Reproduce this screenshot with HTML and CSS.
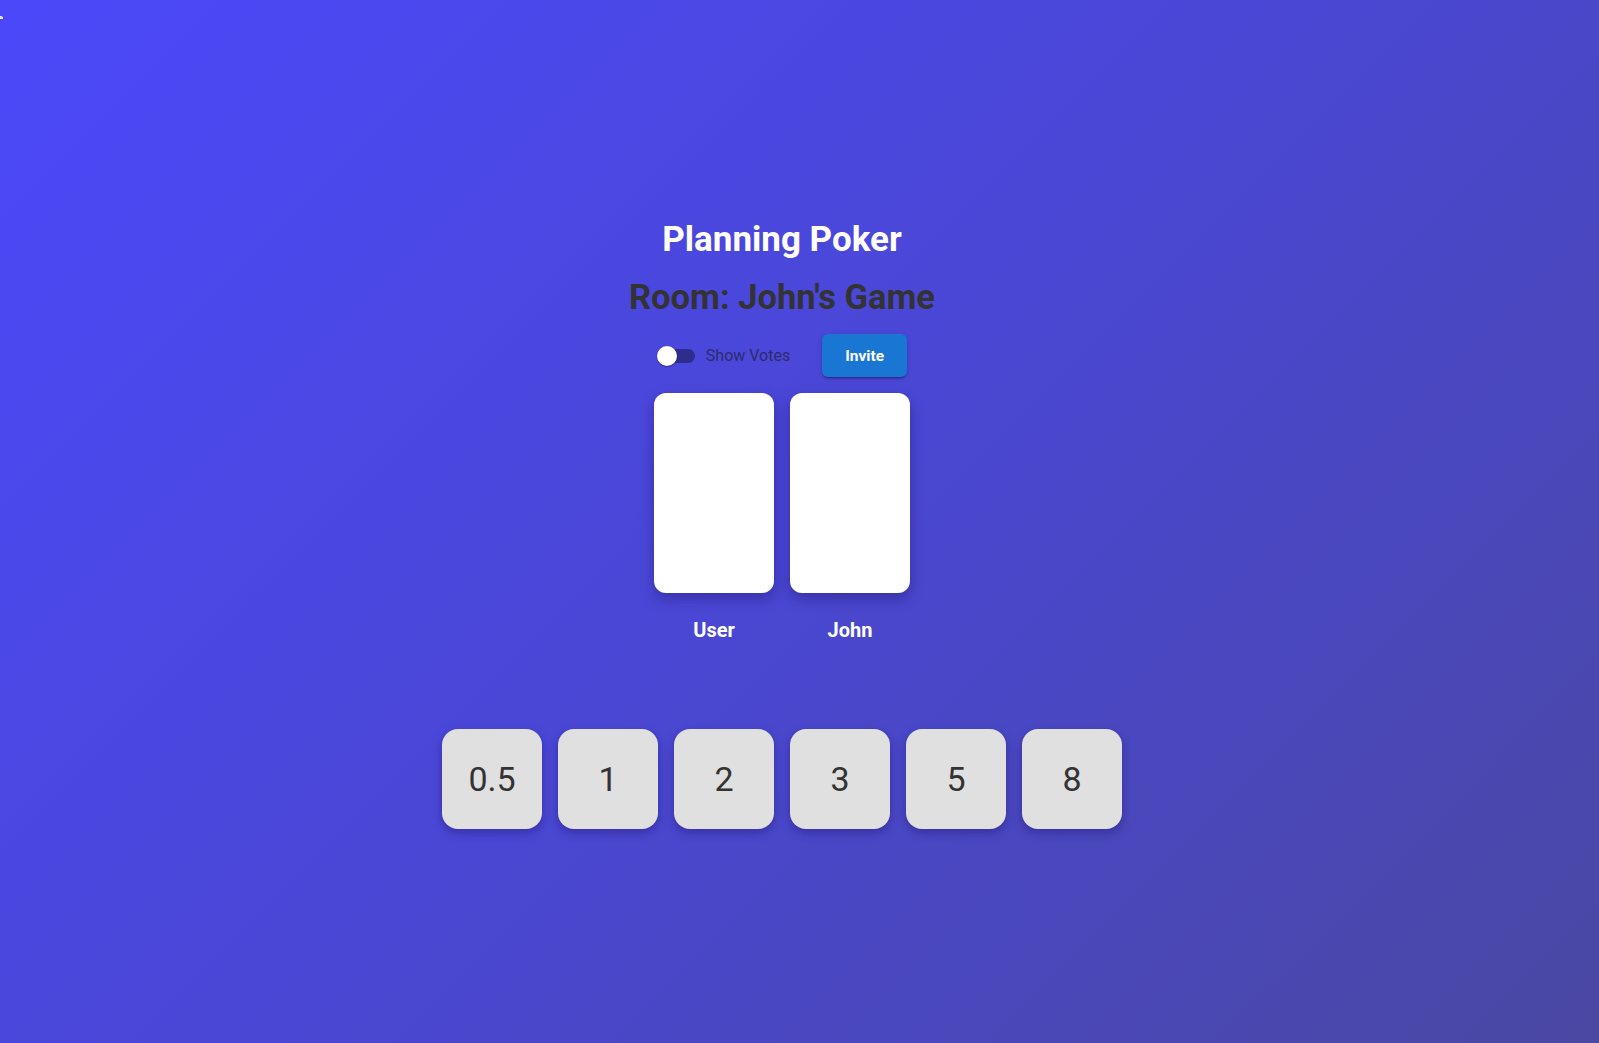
FILE: index.html
```html
<!DOCTYPE html>
<html>
<head>
<meta charset="utf-8">
<link rel="stylesheet" href="styles.css">
</head>
<body>
<span class="artifact"></span>
<main class="page">
  <h1 class="title">Planning Poker</h1>
  <h2 class="room">Room: John's Game</h2>
  <div class="controls">
    <label class="switch-label">
      <span class="switch"><span class="track"></span><span class="thumb"></span></span>
      <span class="switch-text">Show Votes</span>
    </label>
    <button class="invite">Invite</button>
  </div>
  <div class="players">
    <div class="player">
      <div class="card"></div>
      <div class="name">User</div>
    </div>
    <div class="player">
      <div class="card"></div>
      <div class="name">John</div>
    </div>
  </div>
  <div class="deck">
    <button class="vote">0.5</button>
    <button class="vote">1</button>
    <button class="vote">2</button>
    <button class="vote">3</button>
    <button class="vote">5</button>
    <button class="vote">8</button>
  </div>
</main>
</body>
</html>
```
FILE: styles.css
```css
html, body {
  margin: 0;
  height: 100%;
}
body {
  font-family: Roboto, "Liberation Sans", sans-serif;
  background: linear-gradient(135deg, #4b48fa 0%, #4a47d4 50%, #4a48a2 100%);
  overflow: hidden;
  position: relative;
}
.artifact {
  position: absolute;
  left: 0;
  top: 16px;
  width: 3px;
  height: 3px;
  background: #e8e8ff;
  border-top-right-radius: 2px;
}
.page {
  display: flex;
  flex-direction: column;
  align-items: center;
  padding-right: 35px;
  padding-top: 219px;
}
.title {
  margin: 0;
  color: #ffffff;
  font-size: 35px;
  font-weight: 700;
  line-height: 42px;
}
.room {
  margin: 16px 0 0;
  color: #333333;
  font-size: 34.5px;
  font-weight: 700;
  line-height: 40px;
}
.controls {
  display: flex;
  align-items: center;
  margin-top: 17px;
  height: 43px;
}
.switch-label {
  display: flex;
  align-items: center;
  margin-right: 32px;
}
.switch {
  position: relative;
  width: 38px;
  height: 20px;
}
.track {
  position: absolute;
  left: 2px;
  right: 0;
  top: 3px;
  height: 14px;
  border-radius: 7px;
  background: #2f2d8c;
}
.thumb {
  position: absolute;
  left: 0;
  top: 0;
  width: 20px;
  height: 20px;
  border-radius: 50%;
  background: #ffffff;
  box-shadow: 0 2px 1px -1px rgba(0,0,0,0.2), 0 1px 1px rgba(0,0,0,0.14), 0 1px 3px rgba(0,0,0,0.12);
}
.switch-text {
  margin-left: 11px;
  font-size: 16px;
  color: #2d2b6a;
}
.invite {
  width: 85px;
  height: 43px;
  border: none;
  border-radius: 6px;
  background: #1976d2;
  color: #ffffff;
  font-family: Roboto, "Liberation Sans", sans-serif;
  font-weight: 700;
  font-size: 15.5px;
  box-shadow: 0 3px 1px -2px rgba(0,0,0,0.2), 0 2px 2px rgba(0,0,0,0.14), 0 1px 5px rgba(0,0,0,0.12);
}
.players {
  display: flex;
  gap: 16px;
  margin-top: 16px;
}
.player {
  display: flex;
  flex-direction: column;
  align-items: center;
}
.card {
  width: 120px;
  height: 200px;
  border-radius: 12px;
  background: #ffffff;
  box-shadow: 0 6px 14px rgba(20, 10, 90, 0.35);
}
.name {
  margin-top: 25px;
  color: #ffffff;
  font-size: 20px;
  font-weight: 700;
  line-height: 24px;
}
.deck {
  display: flex;
  gap: 16px;
  margin-top: 87px;
}
.vote {
  width: 100px;
  height: 100px;
  border: none;
  border-radius: 16px;
  background: #e0e0e0;
  color: #333333;
  font-family: Roboto, "Liberation Sans", sans-serif;
  font-size: 34px;
  box-shadow: 0 4px 10px rgba(20, 10, 90, 0.35);
  padding: 0;
}
```
